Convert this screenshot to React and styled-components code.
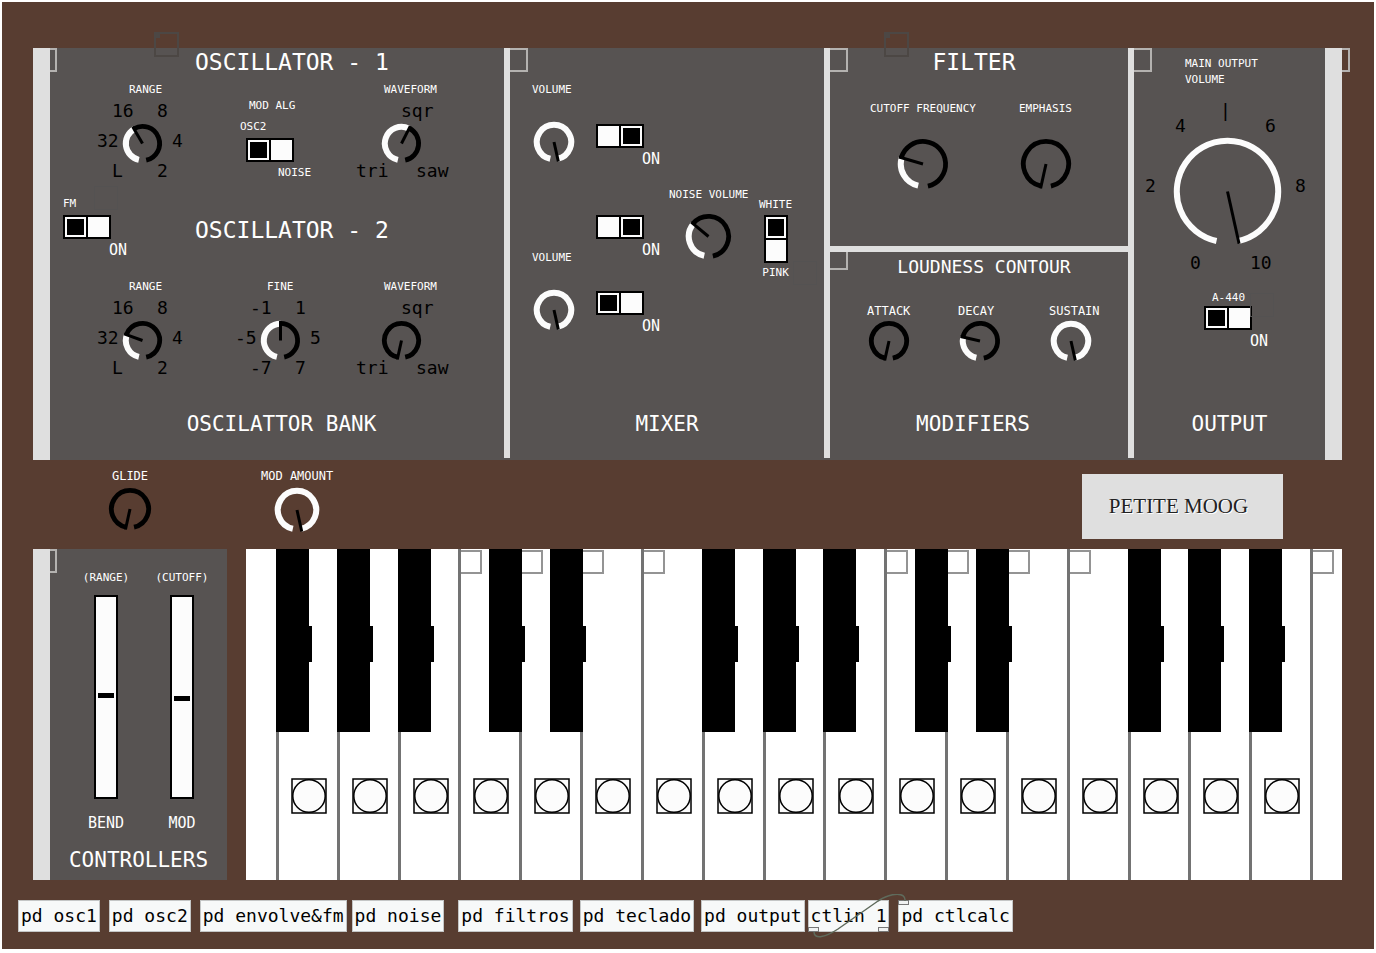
import { useId, useState } from "react";
import styled, { createGlobalStyle, css } from "styled-components";

const GlobalStyle = createGlobalStyle`
  * {
    box-sizing: border-box;
  }
  body {
    margin: 0;
    background: #fff;
    font-family: "DejaVu Sans Mono", monospace;
  }
  button,
  input,
  fieldset {
    margin: 0;
    padding: 0;
    border: 0;
    font: inherit;
    min-width: 0;
  }
`;

const Frame = styled.main`
  margin: 2px 2px 4px;
  padding: 46px 0 17px;
  background: #583d31;
`;

const Rack = styled.div`
  position: relative;
  display: grid;
  grid-template-columns: 17px 454fr 6px 314fr 6px 298fr 6px 191fr 17px;
  margin: 0 32px 0 31px;
  min-height: 412px;
  background: #575352;
`;

const Bar = styled.div`
  position: relative;
  background: #dfdfdf;
`;

const Divider = styled(Bar)`
  margin-bottom: 2px;
`;

const CrossBar = styled(Bar)`
  height: 6px;
`;

// the part of a canvas grip that sticks out from under its bar
const Grip = styled.span`
  position: absolute;
  top: 0;
  left: 100%;
  width: ${(props) => props.$width}px;
  height: 24px;
  border: 2px solid #b4b2b0;
  border-left: 0;
`;

const CrossGrip = styled.span`
  position: absolute;
  top: 100%;
  left: 0;
  width: 18px;
  height: 18px;
  border: solid #b4b2b0;
  border-width: 0 2px 2px 0;
`;

const LooseGrip = styled.span`
  position: absolute;
  left: ${(props) => props.$x}px;
  top: ${(props) => props.$y}px;
  width: 24px;
  height: 24px;
  border: 1px solid #545252;
  pointer-events: none;
  ${(props) =>
    props.$dark &&
    css`
      width: 25px;
      height: 25px;
      border: 2px solid #4c4744;
      &::before {
        content: "";
        display: block;
        width: 4px;
        height: 4px;
        background: #4c4744;
      }
    `}
`;

const Panel = styled.section`
  display: flex;
  flex-direction: column;
  padding-bottom: 22px;
  color: #fff;
`;

const PanelTitle = styled.h2`
  margin: auto 0 0;
  padding: ${(props) => props.$pad || "0"};
  font-size: 21px;
  font-weight: 400;
  line-height: 28px;
  text-align: center;
  white-space: pre;
`;

const SectionTitle = styled.h3`
  margin: 0;
  padding: ${(props) => props.$pad || "0"};
  font-size: ${(props) => (props.$small ? 18 : 23)}px;
  font-weight: 400;
  line-height: 28px;
  text-align: center;
  white-space: pre;
`;

const OscHead = styled.div`
  display: grid;
  grid-template-columns: 145fr 309fr;
  margin-bottom: ${(props) => props.$after}px;
  min-height: ${(props) => props.$height}px;
  ${SectionTitle} {
    grid-column: 2;
    align-self: center;
    text-align: left;
  }
`;

const OscRow = styled.div`
  display: grid;
  grid-template-columns: 138fr 121fr 90px;
  padding: 0 58px 0 47px;
`;

const Label = styled.label`
  display: block;
  padding-left: ${(props) => props.$indent || 0}px;
  font-size: ${(props) => (props.$big ? 12 : 11)}px;
  line-height: 16px;
  color: #fff;
  white-space: pre;
`;

const OnLabel = styled(Label)`
  align-self: flex-end;
  margin-top: 3px;
  font-size: 15px;
`;

const Stack = styled.div`
  display: flex;
  flex-direction: column;
  align-items: ${(props) => props.$align || "flex-start"};
  justify-self: start;
  gap: ${(props) => props.$gap || 0}px;
  padding-top: ${(props) => props.$top || 0}px;
  padding-left: ${(props) => props.$left || 0}px;
`;

const KnobBox = styled.span`
  position: relative;
  display: block;
  width: ${(props) => props.$box}px;
  height: ${(props) => props.$box}px;
  svg {
    display: block;
  }
  input {
    position: absolute;
    inset: 0;
    width: 100%;
    height: 100%;
    opacity: 0;
    cursor: pointer;
  }
`;

const Scale = styled.div`
  display: grid;
  grid-template-columns: repeat(${(props) => props.$cols || 6}, 15px);
  grid-template-rows: ${(props) => props.$rows || "30px 30px 30px"};
  margin-top: ${(props) => props.$top || 0}px;
  ${KnobBox} {
    grid-column: 1 / -1;
    grid-row: ${(props) => props.$knobRow || "1 / -1"};
    place-self: center;
  }
`;

const Mark = styled.span`
  grid-column: ${(props) => props.$col};
  grid-row: ${(props) => props.$row};
  width: 15px;
  font-size: 18px;
  line-height: 26px;
  color: #000;
  white-space: nowrap;
  ${(props) =>
    props.$middle &&
    css`
      align-self: center;
      line-height: 15px;
    `}
`;

const Cells = styled.fieldset`
  display: flex;
  flex-direction: ${(props) => (props.$vertical ? "column" : "row")};
  margin-left: ${(props) => props.$indent || 0}px;
  input {
    appearance: none;
    display: block;
    width: ${(props) => (props.$vertical ? 24 : 25)}px;
    height: ${(props) => (props.$vertical ? 25 : 24)}px;
    padding: 2px;
    border: 2px solid #000;
    background: #fcfcfc;
  }
  input + input {
    ${(props) => (props.$vertical ? "margin-top: -2px" : "margin-left: -2px")};
  }
  input:checked {
    background: linear-gradient(#000, #000) content-box, #fcfcfc;
  }
`;

const SwitchBox = styled.div`
  display: flex;
  flex-direction: column;
  align-items: flex-start;
  width: 64px;
  margin-top: ${(props) => props.$top || 0}px;
`;

const MixerGrid = styled.div`
  display: grid;
  grid-template-columns: 64fr 73fr 90fr 65fr;
  padding-left: 22px;
`;

const FilterBox = styled.div`
  height: 198px;
`;

const FilterRow = styled.div`
  display: grid;
  grid-template-columns: 149fr 109fr;
  padding: 25px 0 0 40px;
`;

const ContourRow = styled.div`
  display: grid;
  grid-template-columns: 91fr 91fr 79fr;
  padding: 22px 0 0 37px;
`;

const Shelf = styled.div`
  display: flex;
  align-items: flex-start;
  min-height: 89px;
  padding: 8px 91px 0 105px;
`;

const ShelfKnobs = styled.div`
  display: flex;
  gap: 108px;
`;

const NamePlate = styled.h1`
  width: 201px;
  margin: 6px 0 0 auto;
  padding-right: 8px;
  background: #dfdfdf;
  color: #222;
  font-family: "Liberation Serif", serif;
  font-size: 21px;
  font-weight: 400;
  line-height: 65px;
  text-align: center;
  text-shadow: 1px 1px 0 #fff;
`;

const Lower = styled.div`
  display: grid;
  grid-template-columns: 194px 1fr;
  gap: 19px;
  margin: 0 32px 0 31px;
`;

const Controllers = styled.section`
  display: grid;
  grid-template-columns: 17px 1fr;
  background: #575352;
  color: #fff;
`;

const Wheels = styled.div`
  display: grid;
  grid-template-columns: 1fr 1fr;
  padding: 21px 7px 15px 18px;
`;

const Wheel = styled.div`
  display: flex;
  flex-direction: column;
  align-items: center;
`;

const WheelName = styled(Label)`
  font-size: 15px;
`;

const WheelSlider = styled.input`
  appearance: none;
  writing-mode: vertical-lr;
  direction: rtl;
  width: 24px;
  height: 204px;
  margin: 9px 0 16px;
  border: 2px solid #000;
  background: #fcfcfc;
  &::-webkit-slider-thumb {
    appearance: none;
    width: 16px;
    height: 5px;
    background: #000;
  }
`;

const Keyboard = styled.div`
  position: relative;
  display: grid;
  grid-template-columns: 30fr repeat(17, 61fr) 32fr;
  background: #fff;
`;

const WhiteKey = styled.div`
  position: relative;
  border-left: 3px solid #737373;
  &:first-child {
    border-left: 0;
  }
`;

const KeyGrip = styled.span`
  position: absolute;
  top: 1px;
  left: 0;
  width: 21px;
  height: 24px;
  border: 2px solid #949494;
  border-left: 0;
`;

const Bang = styled.button`
  display: block;
  width: 36px;
  height: 36px;
  margin: 229px 0 0 12px;
  background: none;
  svg {
    display: block;
  }
`;

const BlackKey = styled.button`
  position: absolute;
  top: 0;
  width: 33px;
  height: 183px;
  background: #000;
  &::after {
    content: "";
    position: absolute;
    top: 77px;
    left: 100%;
    width: 3px;
    height: 36px;
    background: #000;
  }
`;

const PatchBar = styled.nav`
  display: flex;
  margin-top: 20px;
  padding-left: 16px;
`;

const PatchBox = styled.button`
  position: relative;
  height: 32px;
  margin-left: ${(props) => props.$gap}px;
  padding: 0 2px;
  border: 1px solid #c4c6c6;
  background: #f7f9f9;
  color: #000;
  font-size: 18px;
  line-height: 30px;
  white-space: pre;
  text-align: left;
`;

const Port = styled.span`
  position: absolute;
  ${(props) => props.$side}: -1px;
  ${(props) => props.$edge}: -1px;
  width: 11px;
  height: 5px;
  border: 1px solid #777;
  background: #f0f2f2;
`;

const Wire = styled.svg`
  position: absolute;
  top: -7px;
  left: -1px;
  z-index: 1;
  pointer-events: none;
`;

const SWEEP = 335;

const point = (c, r, deg) => {
  const a = (deg * Math.PI) / 180;
  return [c + r * Math.sin(a), c - r * Math.cos(a)];
};

const arc = (c, r, from, to) => {
  const [x1, y1] = point(c, r, from);
  const [x2, y2] = point(c, r, to);
  return `M${x1} ${y1}A${r} ${r} 0 ${to - from > 180 ? 1 : 0} 1 ${x2} ${y2}`;
};

const Knob = ({ id, name, size, start }) => {
  const [value, setValue] = useState(start);
  const box = size + 4;
  const c = box / 2;
  const r = size / 2;
  const min = -SWEEP / 2;
  const now = min + (SWEEP * value) / 100;
  const [nx, ny] = point(c, r, now);
  return (
    <KnobBox $box={box}>
      <svg width={box} height={box} fill="none">
        {value < 100 && (
          <path d={arc(c, r - 2.4, now, -min)} stroke="#000" strokeWidth="4.8" />
        )}
        {value > 0 && (
          <path d={arc(c, r - 2.8, min, now)} stroke="#fcfcfc" strokeWidth="6" />
        )}
        <path d={`M${c} ${c}L${nx} ${ny}`} stroke="#000" strokeWidth="3" />
      </svg>
      <input
        id={id}
        type="range"
        aria-label={name}
        value={value}
        onChange={(e) => setValue(Number(e.target.value))}
      />
    </KnobBox>
  );
};

const LabelKnob = ({ label, size, start, gap, align, top, big }) => {
  const id = useId();
  return (
    <Stack $gap={gap} $align={align} $top={top}>
      <Label htmlFor={id} $big={big}>
        {label}
      </Label>
      <Knob id={id} size={size} start={start} />
    </Stack>
  );
};

const footMarks = {
  range: [
    ["16", 2, 1],
    ["8", 5, 1],
    ["32", 1, 2],
    ["4", 6, 2],
    ["L", 2, 3],
    ["2", 5, 3],
  ],
  fine: [
    ["-1", 2, 1],
    ["1", 5, 1],
    ["-5", 1, 2],
    ["5", 6, 2],
    ["-7", 2, 3],
    ["7", 5, 3],
  ],
  wave: [
    ["sqr", 4, 1],
    ["tri", 1, 3],
    ["saw", 5, 3],
  ],
};

const outputMarks = [
  ["|", 6, 1],
  ["4", 3, 2],
  ["6", 9, 2],
  ["2", 1, 4],
  ["8", 11, 4],
  ["0", 4, 6],
  ["10", 8, 6],
];

const ScaleKnob = ({ label, indent, marks, start }) => {
  const id = useId();
  return (
    <div>
      <Label htmlFor={id} $indent={indent}>
        {label}
      </Label>
      <Scale>
        {marks.map(([text, col, row]) => (
          <Mark key={text} $col={col} $row={row}>
            {text}
          </Mark>
        ))}
        <Knob id={id} size={39} start={start} />
      </Scale>
    </div>
  );
};

const TwoWay = ({ id, name, second, vertical, indent }) => (
  <Cells $vertical={vertical} $indent={indent} aria-label={name}>
    <input
      type="radio"
      id={`${id}-a`}
      name={id}
      aria-label={`${name} 1`}
      defaultChecked={!second}
    />
    <input
      type="radio"
      id={`${id}-b`}
      name={id}
      aria-label={`${name} 2`}
      defaultChecked={second}
    />
  </Cells>
);

const OnSwitch = ({ name, second, top, children }) => {
  const id = useId();
  return (
    <SwitchBox $top={top}>
      {children}
      <TwoWay id={id} name={name} second={second} />
      <OnLabel htmlFor={`${id}-b`}>ON</OnLabel>
    </SwitchBox>
  );
};

const OscillatorBank = () => (
  <Panel>
    <OscHead $after={6} $height={28}>
      <SectionTitle>OSCILLATOR - 1</SectionTitle>
    </OscHead>
    <OscRow>
      <ScaleKnob label="RANGE" indent={32} marks={footMarks.range} start={41} />
      <Stack $top={16} $left={5}>
        <Label as="span" $indent={9}>
          MOD ALG
        </Label>
        <Stack $top={5} $gap={3}>
          <Label htmlFor="alg-a">OSC2</Label>
          <TwoWay id="alg" name="MOD ALG" indent={6} />
          <Label htmlFor="alg-b" $indent={38}>
            NOISE
          </Label>
        </Stack>
      </Stack>
      <ScaleKnob label="WAVEFORM" indent={28} marks={footMarks.wave} start={58} />
    </OscRow>
    <Stack $top={8} />
    <OscHead $after={15} $height={68}>
      <Stack $left={13}>
        <OnSwitch name="FM">
          <Stack>
            <Label as="span">FM</Label>
            <Stack $top={3} />
          </Stack>
        </OnSwitch>
      </Stack>
      <SectionTitle>OSCILLATOR - 2</SectionTitle>
    </OscHead>
    <OscRow>
      <ScaleKnob label="RANGE" indent={32} marks={footMarks.range} start={29} />
      <ScaleKnob label="FINE" indent={32} marks={footMarks.fine} start={50} />
      <ScaleKnob label="WAVEFORM" indent={28} marks={footMarks.wave} start={0} />
    </OscRow>
    <PanelTitle $pad="0 0 0 9px">OSCILATTOR BANK</PanelTitle>
  </Panel>
);

const Mixer = () => (
  <Panel>
    <MixerGrid>
      <Stack $top={34} $gap={86}>
        <LabelKnob label="VOLUME" size={40} start={100} gap={22} />
        <LabelKnob label="VOLUME" size={40} start={100} gap={22} />
      </Stack>
      <div>
        <OnSwitch name="Oscillator 1" second top={76} />
        <OnSwitch name="Noise" second top={48} />
        <OnSwitch name="Oscillator 2" top={33} />
      </div>
      <LabelKnob
        label="NOISE VOLUME"
        size={45}
        start={35}
        gap={9}
        align="center"
        top={139}
      />
      <Stack $top={149} $gap={2} $align="center">
        <Label htmlFor="noise-a">WHITE</Label>
        <TwoWay id="noise" name="Noise colour" vertical />
        <Label htmlFor="noise-b">PINK</Label>
      </Stack>
    </MixerGrid>
    <PanelTitle>MIXER</PanelTitle>
  </Panel>
);

const Modifiers = () => (
  <Panel>
    <FilterBox>
      <SectionTitle $pad="0 10px 0 0">FILTER</SectionTitle>
      <FilterRow>
        <LabelKnob
          label="CUTOFF FREQUENCY"
          size={50}
          start={28}
          gap={20}
          align="center"
        />
        <LabelKnob label="EMPHASIS" size={50} start={0} gap={20} />
      </FilterRow>
    </FilterBox>
    <CrossBar>
      <CrossGrip />
    </CrossBar>
    <SectionTitle $small $pad="1px 0 0 10px">
      LOUDNESS CONTOUR
    </SectionTitle>
    <ContourRow>
      <LabelKnob big label="ATTACK" size={40} start={0} />
      <LabelKnob big label="DECAY" size={40} start={27} />
      <LabelKnob big label="SUSTAIN" size={40} start={100} />
    </ContourRow>
    <PanelTitle $pad="0 12px 0 0">MODIFIERS</PanelTitle>
  </Panel>
);

const Output = () => (
  <Panel>
    <Stack $top={8} $left={51}>
      <Label htmlFor="main-volume">{"MAIN OUTPUT\nVOLUME"}</Label>
    </Stack>
    <Stack $left={11}>
      <Scale
        $cols={11}
        $rows="15px 15px 45px 15px 56px 26px"
        $knobRow="3 / 6"
        $top={15}
      >
        {outputMarks.map(([text, col, row]) => (
          <Mark key={text} $col={col} $row={row} $middle>
            {text}
          </Mark>
        ))}
        <Knob id="main-volume" size={107} start={100} />
      </Scale>
    </Stack>
    <Stack $top={15} $left={70}>
      <OnSwitch name="A-440">
        <Label as="span" $indent={8}>
          A-440
        </Label>
      </OnSwitch>
    </Stack>
    <PanelTitle>OUTPUT</PanelTitle>
  </Panel>
);

const wheels = [
  { label: "(RANGE)", name: "BEND", value: 51 },
  { label: "(CUTOFF)", name: "MOD", value: 49 },
];

// left edges of the black keys, counted in half white keys
const blackKeys = [0, 2, 4, 7, 9, 14, 16, 18, 21, 23, 28, 30, 32];

const Keys = () => (
  <Keyboard>
    {Array.from({ length: 19 }, (_, i) => (
      <WhiteKey key={i}>
        {i > 0 && <KeyGrip />}
        {i > 0 && i < 18 && (
          <Bang aria-label={`Key ${i}`}>
            <svg width="36" height="36" fill="#fcfcfc" stroke="#000">
              <rect x="1" y="1" width="34" height="34" strokeWidth="1.5" />
              <circle cx="18" cy="18" r="16.2" strokeWidth="1.5" />
            </svg>
          </Bang>
        )}
      </WhiteKey>
    ))}
    {blackKeys.map((half) => (
      <BlackKey
        key={half}
        aria-label={`Black key ${half}`}
        style={{ left: `${((30 + half * 30.5) / 1099) * 100}%` }}
      />
    ))}
  </Keyboard>
);

const App = () => {
  return (
    <>
      <GlobalStyle />
      <Frame>
        <Rack>
          <Bar>
            <Grip $width={7} />
          </Bar>
          <OscillatorBank />
          <Divider>
            <Grip $width={18} />
          </Divider>
          <Mixer />
          <Divider>
            <Grip $width={18} />
          </Divider>
          <Modifiers />
          <Divider>
            <Grip $width={18} />
          </Divider>
          <Output />
          <Bar>
            <Grip $width={8} />
          </Bar>
          <LooseGrip $dark $x={121} $y={-16} />
          <LooseGrip $dark $x={851} $y={-16} />
          <LooseGrip $x={61} $y={138} />
          <LooseGrip $x={760} $y={213} />
          <LooseGrip $x={1217} $y={245} />
        </Rack>
        <Shelf>
          <ShelfKnobs>
            <LabelKnob big label="GLIDE" size={42} start={0} gap={2} align="center" />
            <LabelKnob
              big
              label="MOD AMOUNT"
              size={44}
              start={100}
              gap={2}
              align="center"
            />
          </ShelfKnobs>
          <NamePlate>PETITE MOOG</NamePlate>
        </Shelf>
        <Lower>
          <Controllers>
            <Bar>
              <Grip $width={7} />
            </Bar>
            <div>
              <Wheels>
                {wheels.map(({ label, name, value }) => (
                  <Wheel key={name}>
                    <Label as="span">{label}</Label>
                    <WheelSlider id={name} type="range" defaultValue={value} />
                    <WheelName htmlFor={name}>{name}</WheelName>
                  </Wheel>
                ))}
              </Wheels>
              <PanelTitle $pad="0 0 6px">CONTROLLERS</PanelTitle>
            </div>
          </Controllers>
          <Keys />
        </Lower>
        <PatchBar>
          <PatchBox $gap={0}>pd osc1</PatchBox>
          <PatchBox $gap={9}>pd osc2</PatchBox>
          <PatchBox $gap={9}>pd envolve&amp;fm</PatchBox>
          <PatchBox $gap={5}>pd noise</PatchBox>
          <PatchBox $gap={14}>pd filtros</PatchBox>
          <PatchBox $gap={7}>pd teclado</PatchBox>
          <PatchBox $gap={7}>pd output</PatchBox>
          <PatchBox $gap={3}>
            ctlin 1
            <Port $side="left" $edge="bottom" />
            <Port $side="right" $edge="bottom" />
            <Wire width="104" height="46" fill="none">
              <path
                d="M6 38C6 46 18 43 30 35L70 7C84 -2 98 -2 97 7"
                stroke="#5f6b5c"
                strokeWidth="1.5"
              />
            </Wire>
          </PatchBox>
          <PatchBox $gap={9}>
            pd ctlcalc
            <Port $side="left" $edge="top" />
          </PatchBox>
        </PatchBar>
      </Frame>
    </>
  );
};

export default App;
